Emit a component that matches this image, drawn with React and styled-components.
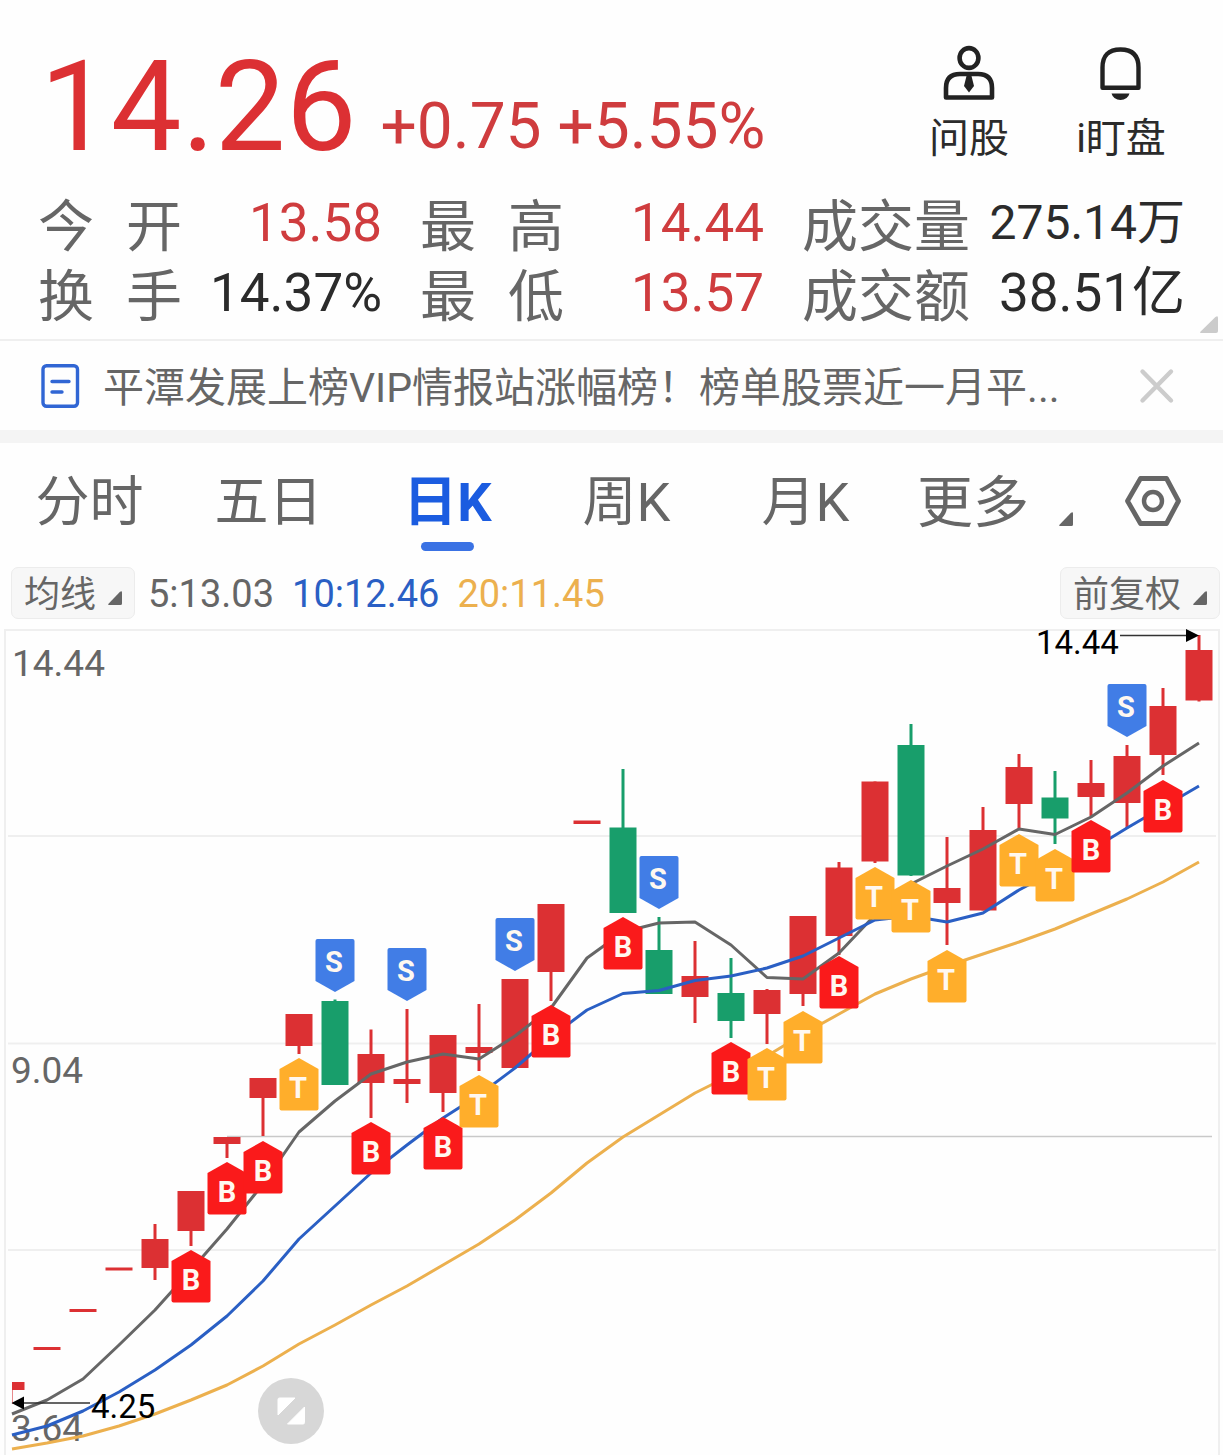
import React, { useState } from "react";
import styled, { createGlobalStyle } from "styled-components";

const color = {
  up: "#dc3033",
  down: "#189e6b",
  ink: "#2b2b2b",
  muted: "#666666",
  faint: "#cccccc",
  rule: "#efefef",
  band: "#f4f4f4",
  blue: "#1b5ce0",
  ma10: "#2a5fc4",
  amber: "#ecb04e",
};

const Global = createGlobalStyle`
  * { box-sizing: border-box; }
  body {
    margin: 0;
    background: #fefefe;
    color: ${color.ink};
    font-family: Roboto, "Noto Sans CJK SC", sans-serif;
    overflow-x: hidden;
  }
  button {
    margin: 0;
    padding: 0;
    border: 0;
    background: none;
    color: inherit;
    font: inherit;
    cursor: pointer;
  }
  svg { display: block; }
`;

const Page = styled.main`
  display: flex;
  flex-direction: column;
`;

/* ---------- quote header ---------- */

const Header = styled.header`
  position: relative;
  padding: 43px 38px 7px 40px;
  border-bottom: 2px solid ${color.rule};
`;

const PriceRow = styled.div`
  display: flex;
  justify-content: space-between;
  height: 149px;
`;

const PriceGroup = styled.div`
  display: flex;
  align-items: flex-end;
  gap: 24px;
  height: 128px;
  color: ${color.up};
  white-space: nowrap;
`;

const Price = styled.strong`
  font-size: 126px;
  line-height: 128px;
  font-weight: 400;
`;

const Change = styled.span`
  font-size: 64px;
  line-height: 88px;
  color: #cf3c3e;
`;

const Actions = styled.nav`
  display: flex;
  gap: 52px;
  padding: 2px 14px 0 0;
`;

const Action = styled.button`
  display: flex;
  flex-direction: column;
  align-items: center;
  gap: 16px;
  width: 100px;
  height: 116px;
  font-size: 40px;
  line-height: 44px;
  white-space: nowrap;
`;

const Stats = styled.dl`
  display: grid;
  grid-template-columns: 344fr 344fr 383fr;
  column-gap: 38px;
  margin: 0 0 0 -2px;
`;

const Stat = styled.div`
  display: flex;
  justify-content: space-between;
  height: 70px;
  white-space: nowrap;
`;

const StatName = styled.dt`
  width: ${(p) => (p.$wide ? "168px" : "144px")};
  font-size: 56px;
  line-height: 70px;
  color: ${color.muted};
  text-align-last: justify;
`;

const StatValue = styled.dd`
  margin: 0;
  font-size: ${(p) => (p.$compact ? "48px" : "53px")};
  line-height: 62px;
  color: ${(p) => (p.$up ? "#cf3c3e" : color.ink)};
`;

const ExpandCorner = styled.button`
  position: absolute;
  right: 5px;
  bottom: 6px;
  color: #cbcbcb;
`;

/* ---------- news strip ---------- */

const News = styled.section`
  display: flex;
  align-items: center;
  height: 89px;
  padding: 0 47px 0 40px;
`;

const NewsLink = styled.a`
  flex: 1;
  min-width: 0;
  margin-left: 23px;
  padding-top: 4px;
  font-size: 41px;
  line-height: 52px;
  color: ${color.muted};
  text-decoration: none;
  white-space: nowrap;
  overflow: hidden;
`;

const Band = styled.div`
  height: 13px;
  background: ${color.band};
`;

/* ---------- period tabs ---------- */

const Tabs = styled.div`
  display: grid;
  grid-template-columns: repeat(5, 179fr) 188fr 140fr;
  height: 124px;
  padding-top: 30px;
`;

const Tab = styled.button`
  display: flex;
  flex-direction: column;
  align-items: center;
  gap: 9px;
  font-size: 54px;
  line-height: 60px;
  font-weight: ${(p) => (p.$active ? 700 : 400)};
  color: ${(p) => (p.$active ? color.blue : color.muted)};
  white-space: nowrap;

  &::after {
    content: "";
    width: 53px;
    height: 9px;
    border-radius: 5px;
    background: ${(p) => (p.$active ? "#3a72e4" : "transparent")};
  }
`;

const MoreTab = styled.button`
  display: flex;
  align-items: flex-end;
  gap: 30px;
  height: 60px;
  padding: 0 0 7px 22px;
  font-size: 56px;
  line-height: 46px;
  color: ${color.muted};
  white-space: nowrap;
`;

const SettingsButton = styled.button`
  display: flex;
  justify-content: center;
  align-items: center;
  height: 56px;
  color: ${color.muted};
`;

/* ---------- moving averages ---------- */

const AverageRow = styled.div`
  display: flex;
  align-items: center;
  justify-content: space-between;
  padding: 0 3px 0 11px;
  margin-bottom: 9px;
`;

const Averages = styled.div`
  display: flex;
  align-items: center;
  gap: 18px;
`;

const Chip = styled.button`
  display: flex;
  align-items: center;
  gap: 12px;
  height: 52px;
  padding: 3px 12px 0;
  border: 1px solid #ececec;
  border-radius: 7px;
  background: #f7f7f7;
  font-size: 36px;
  line-height: 44px;
  color: ${color.muted};
  white-space: nowrap;
`;

const ChipMark = styled.span`
  padding-top: 6px;
`;

const Average = styled.span`
  padding-top: 2px;
  font-size: 38px;
  line-height: 48px;
  color: ${(p) => p.$tone};

  &:first-of-type { margin-left: -5px; }
`;

/* ---------- chart ---------- */

const ChartPanel = styled.section`
  position: relative;
`;

const ChartSvg = styled.svg`
  width: 100%;
  height: auto;
  overflow: visible;
  font-family: Roboto, sans-serif;
`;

const AxisText = styled.text`
  font-size: 37px;
  fill: ${color.muted};
`;

const NoteText = styled.text`
  font-size: 33px;
  fill: #000;
`;

const FlagText = styled.text`
  font-size: 29px;
  font-weight: 700;
  fill: #fff8f0;
  text-anchor: middle;
`;

const RotateButton = styled.button`
  position: absolute;
  left: 258px;
  bottom: 11px;
  width: 66px;
  height: 66px;
  border-radius: 50%;
`;

const STEP = 36;
const xAt = (i) => 11 + i * STEP;

// [high, top, bottom, low, falling?]
const candles = [
  [1382, 1382, 1390, 1390],
  [1347, 1347, 1350, 1350],
  [1309, 1309, 1312, 1312],
  [1267.5, 1267.5, 1270.5, 1270.5],
  [1224, 1239, 1268, 1280],
  [1191, 1191, 1231, 1246],
  [1137, 1137, 1144, 1158],
  [1078, 1078, 1098, 1136],
  [1014, 1014, 1046, 1054],
  [999.5, 1001, 1085, 1085, 1],
  [1029.5, 1054, 1083, 1118],
  [1009, 1079, 1084, 1103],
  [1035, 1035, 1093, 1112],
  [1004, 1047, 1053, 1071],
  [979, 979, 1068, 1068],
  [904, 904, 972, 1001],
  [820.5, 820.5, 824, 824],
  [769, 827.5, 913, 913, 1],
  [917, 950, 994, 994, 1],
  [941, 976, 997, 1023],
  [958, 993, 1021, 1038, 1],
  [989, 990, 1014, 1044],
  [916, 916, 994, 1006],
  [862, 867.5, 936, 955],
  [781.5, 781.5, 861.5, 863],
  [724, 745, 875.5, 876, 1],
  [837, 888, 903, 945],
  [807, 830, 910.5, 910.5],
  [754, 767, 804, 829],
  [771, 797.5, 818.5, 844, 1],
  [760, 783, 797, 816],
  [745, 756, 803, 828],
  [688, 706, 755, 775],
  [635, 650, 700.5, 701.5],
];

const ma5 = [1414, 1400, 1379, 1345, 1310, 1270, 1229, 1184, 1132, 1101, 1074, 1062, 1054, 1059, 1036, 1008, 958, 932, 923, 922, 945, 977.5, 979, 953, 915, 884, 866, 849, 829, 834.5, 817, 793, 766, 743];
const ma10 = [1435, 1426, 1411, 1392, 1370, 1345, 1316, 1281, 1239, 1206, 1173, 1145, 1118, 1095, 1068, 1037, 1010, 993.5, 990.5, 980.5, 976, 968, 956, 938, 920, 916, 922, 913, 890, 871, 850, 828, 807, 786];
const ma20 = [1449, 1443, 1436, 1426, 1414, 1400, 1385, 1366, 1344, 1325, 1305, 1286, 1265, 1244, 1220, 1193, 1163, 1137, 1115, 1093, 1075, 1056, 1034, 1014, 994, 979, 966, 954, 942, 929, 914, 899, 882, 862];

// [candle index, kind, top edge]
const flags = [
  [5, "B", 1250], [6, "B", 1162], [7, "B", 1141], [8, "T", 1058], [9, "S", 939],
  [10, "B", 1122], [11, "S", 948], [12, "B", 1117], [13, "T", 1075], [14, "S", 918],
  [15, "B", 1005], [17, "B", 917], [18, "S", 856], [20, "B", 1042], [21, "T", 1048],
  [22, "T", 1011], [23, "B", 956], [24, "T", 867], [25, "T", 880], [26, "T", 950],
  [28, "T", 834], [29, "T", 849], [30, "B", 820], [31, "S", 684], [32, "B", 780],
];

const flagFill = { B: "#fa1a1b", T: "#ffae2b", S: "#417de6" };

const linePoints = (values) => values.map((v, i) => `${i === 0 ? 12 : xAt(i)},${v}`).join(" ");

function Candle({ index, data }) {
  const [high, top, bottom, low, falling] = data;
  const x = xAt(index);
  const fill = falling ? color.down : color.up;
  return (
    <g fill={fill}>
      {low - high > bottom - top && <rect x={x - 1.5} y={high} width="3" height={low - high} />}
      <rect x={x - 13.5} y={top} width="27" height={bottom - top} />
    </g>
  );
}

function Flag({ index, kind, top }) {
  const up = "M0 0 L19.5 11 V50.5 q0 2 -2 2 H-17.5 q-2 0 -2 -2 V11 Z";
  const down = "M0 53 L19.5 42 V2 q0 -2 -2 -2 H-17.5 q-2 0 -2 2 V42 Z";
  const sell = kind === "S";
  return (
    <g transform={`translate(${xAt(index)} ${top})`}>
      <path d={sell ? down : up} fill={flagFill[kind]} />
      <FlagText x={kind === "B" ? 0 : -1} y={sell ? 33 : 40}>{kind}</FlagText>
    </g>
  );
}

function KLineChart() {
  return (
    <ChartSvg viewBox="0 628 1223 827" role="img" aria-label="日K">
      <defs>
        <clipPath id="plot"><rect x="12" y="628" width="1204" height="827" /></clipPath>
      </defs>
      <g fill="none" stroke={color.rule} strokeWidth="2">
        <path d="M5 1455V630H1219V1455" />
        <path d="M8 836H1216M8 1043.5H1216M8 1250H1216" />
      </g>
      <path d="M227 1136.5H1212" stroke="#c9c9c9" strokeWidth="1.5" />
      <g clipPath="url(#plot)">
        <path d="M12.5 1390V1404" stroke="#e88a8c" />
        {candles.map((c, i) => <Candle key={i} index={i} data={c} />)}
      </g>
      <AxisText x="12" y="676">14.44</AxisText>
      <AxisText x="11" y="1083">9.04</AxisText>
      <AxisText x="11" y="1441">3.64</AxisText>
      <g fill="none" strokeWidth="3" strokeLinejoin="round">
        <polyline points={linePoints(ma5)} stroke="#666" />
        <polyline points={linePoints(ma10)} stroke={color.ma10} />
        <polyline points={linePoints(ma20)} stroke={color.amber} />
      </g>
      {flags.map(([i, kind, top]) => <Flag key={i} index={i} kind={kind} top={top} />)}
      <path d="M1120 635.5H1188M22 1403H90" stroke="#333" strokeWidth="1.3" />
      <path d="M1186 629V642L1199 635.5ZM24 1396.5V1409.5L11.5 1403Z" fill="#000" />
      <NoteText x="1036" y="654">14.44</NoteText>
      <NoteText x="91" y="1418">4.25</NoteText>
    </ChartSvg>
  );
}

/* ---------- icons ---------- */

const Corner = ({ w = 14, h = 14 }) => (
  <svg width={w} height={h} viewBox="0 0 14 14" preserveAspectRatio="none" aria-hidden="true">
    <path d="M14 1.5V12.5Q14 14 12.5 14H1Q-.5 14 .5 12.8L12 .8Q14 -.8 14 1.5Z" fill="currentColor" />
  </svg>
);

const AdvisorIcon = () => (
  <svg width="56" height="56" viewBox="0 0 56 56" fill="none" stroke="#222" strokeWidth="4.6" aria-hidden="true">
    <ellipse cx="28" cy="13" rx="9.4" ry="9.9" />
    <path d="M5 52.5V43Q5 29 19 29H37Q51 29 51 43V52.5Z" strokeLinejoin="round" />
    <path d="M25.5 31H30.5L33 41L28 47.5L23 41Z" fill="#222" stroke="none" />
  </svg>
);

const BellIcon = () => (
  <svg width="56" height="56" viewBox="0 0 56 56" fill="none" stroke="#222" strokeWidth="4.4" aria-hidden="true">
    <path d="M9.5 42.8V22.5Q9.5 4.5 27.5 4.5T45.5 22.5V42.8Z" strokeLinejoin="round" />
    <path d="M18.5 48.5H36.5Q34.5 55 27.5 55T18.5 48.5Z" fill="#222" stroke="none" />
  </svg>
);

const NoteIcon = () => (
  <svg width="40" height="46" viewBox="0 0 40 46" fill="none" stroke="#3166d4" strokeWidth="3.4" aria-hidden="true">
    <rect x="3" y="2.7" width="34.5" height="40.6" rx="3.5" />
    <path d="M12 18.5H29M12 29H22" strokeLinecap="round" />
  </svg>
);

const CloseIcon = () => (
  <svg width="38" height="38" viewBox="0 0 38 38" stroke={color.faint} strokeWidth="4.4" strokeLinecap="round" aria-hidden="true">
    <path d="M4.500 4.500L33 33.500M33 4.500L4.500 33.500" />
  </svg>
);

const HexIcon = () => (
  <svg width="58" height="54" viewBox="0 0 58 54" fill="none" stroke="currentColor" strokeLinejoin="round" aria-hidden="true">
    <path d="M16.500 4.500H42.500L54.500 27L42.500 49.500H16.500L3.500 27Z" strokeWidth="4.800" />
    <circle cx="29" cy="27" r="9" strokeWidth="4.400" />
  </svg>
);

const RotateIcon = () => (
  <svg width="66" height="66" viewBox="0 0 66 66" aria-hidden="true">
    <circle cx="33" cy="33" r="33" fill="#d7d7d7" />
    <path d="M21.500 20H37L20 37V21.500Q20 20 21.500 20ZM46.500 29V44.500Q46.500 46 45 46H29.500Z" fill="#fff" stroke="#fff" strokeLinejoin="round" />
  </svg>
);

/* ---------- page ---------- */

const stats = [
  { name: "今 开", value: "13.58", up: true },
  { name: "最 高", value: "14.44", up: true },
  { name: "成交量", value: "275.14万", wide: true, compact: true },
  { name: "换 手", value: "14.37%" },
  { name: "最 低", value: "13.57", up: true },
  { name: "成交额", value: "38.51亿", wide: true },
];

const periods = ["分时", "五日", "日K", "周K", "月K"];

export default function App() {
  const [period, setPeriod] = useState("日K");
  const [newsOpen, setNewsOpen] = useState(true);

  return (
    <>
      <Global />
      <Page>
        <Header>
          <PriceRow>
            <PriceGroup>
              <Price>14.26</Price>
              <Change>+0.75 +5.55%</Change>
            </PriceGroup>
            <Actions>
              <Action type="button"><AdvisorIcon />问股</Action>
              <Action type="button"><BellIcon />i盯盘</Action>
            </Actions>
          </PriceRow>
          <Stats>
            {stats.map((s) => (
              <Stat key={s.name}>
                <StatName $wide={s.wide}>{s.name}</StatName>
                <StatValue $up={s.up} $compact={s.compact}>{s.value}</StatValue>
              </Stat>
            ))}
          </Stats>
          <ExpandCorner type="button" aria-label="展开"><Corner w={18} h={17} /></ExpandCorner>
        </Header>

        {newsOpen && (
          <News>
            <NoteIcon />
            <NewsLink href="#news">平潭发展上榜VIP情报站涨幅榜！榜单股票近一月平...</NewsLink>
            <button type="button" aria-label="关闭" onClick={() => setNewsOpen(false)}><CloseIcon /></button>
          </News>
        )}
        <Band />

        <Tabs>
          {periods.map((p) => (
            <Tab key={p} type="button" $active={p === period} aria-pressed={p === period} onClick={() => setPeriod(p)}>
              {p}
            </Tab>
          ))}
          <MoreTab type="button">更多<Corner /></MoreTab>
          <SettingsButton type="button" aria-label="设置"><HexIcon /></SettingsButton>
        </Tabs>

        <AverageRow>
          <Averages>
            <Chip type="button">均线<ChipMark><Corner /></ChipMark></Chip>
            <Average $tone={color.muted}>5:13.03</Average>
            <Average $tone={color.ma10}>10:12.46</Average>
            <Average $tone={color.amber}>20:11.45</Average>
          </Averages>
          <Chip type="button">前复权<ChipMark><Corner /></ChipMark></Chip>
        </AverageRow>

        <ChartPanel>
          <KLineChart />
          <RotateButton type="button" aria-label="横屏"><RotateIcon /></RotateButton>
        </ChartPanel>
      </Page>
    </>
  );
}
